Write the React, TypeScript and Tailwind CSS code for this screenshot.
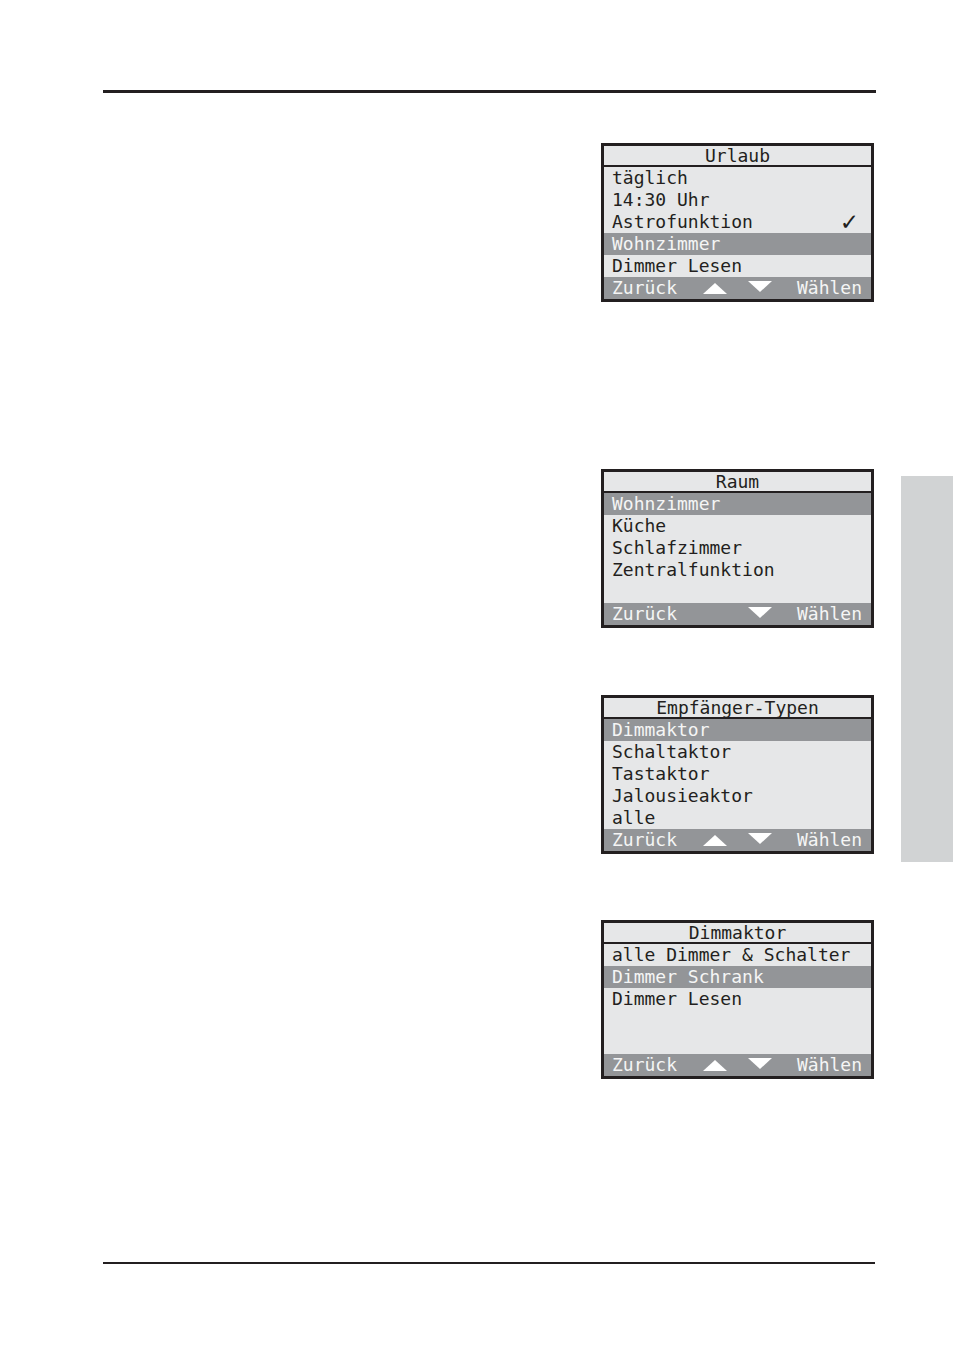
import React from 'react';

type Row = { label: string; active?: boolean; check?: boolean };

const Up: React.FC<{ hidden?: boolean }> = ({ hidden }) => (
  <svg width="24" height="11" viewBox="0 0 24 11" className={`mt-[6px] ${hidden ? 'invisible' : ''}`}>
    <polygon points="0,11 12,0 24,11" fill="#ffffff" />
  </svg>
);

const Down: React.FC = () => (
  <svg width="24" height="11" viewBox="0 0 24 11" className="mt-[4px] ml-[21px]">
    <polygon points="0,0 24,0 12,11" fill="#ffffff" />
  </svg>
);

const Screen: React.FC<{ title: string; rows: Row[]; up?: boolean }> = ({ title, rows, up = true }) => {
  const filled = [...rows];
  while (filled.length < 5) filled.push({ label: '' });

  return (
    <div className="w-[273px] border-[3px] border-[#231f20] bg-[#e6e7e8] font-['DejaVu_Sans_Mono',monospace] text-[18px] text-[#231f20]">
      {/* header */}
      <div className="h-[21px] border-b-2 border-[#231f20] text-center leading-[19px]">{title}</div>

      {filled.map((row, i) => (
        <div
          key={i}
          className={`flex h-[22px] items-center pl-[8px] pr-[12px] leading-[22px] whitespace-pre ${
            row.active ? 'bg-[#939598] text-[#f5f5f5]' : ''
          }`}
        >
          <span>{row.label}</span>
          {row.check && (
            <span className="ml-auto font-['DejaVu_Sans',sans-serif] text-[23px] leading-[22px]">✓</span>
          )}
        </div>
      ))}

      {/* footer */}
      <div className="flex h-[22px] items-start bg-[#939598] pl-[8px] pr-[9px] leading-[22px] text-[#f5f5f5]">
        <span>Zurück</span>
        <div className="ml-[26px] flex">
          <Up hidden={!up} />
          <Down />
        </div>
        <span className="ml-auto">Wählen</span>
      </div>
    </div>
  );
};

const App: React.FC = () => {
  return (
    <div className="h-[1352px] w-[953px] bg-white">
      <div className="h-[90px]" />
      <div className="ml-[103px] h-[3px] w-[773px] bg-[#231f20]" />

      <div className="flex h-[1169px]">
        <div className="flex w-[901px] flex-col pl-[601px] pt-[50px]">
          <Screen
            title="Urlaub"
            rows={[
              { label: 'täglich' },
              { label: '14:30 Uhr' },
              { label: 'Astrofunktion', check: true },
              { label: 'Wohnzimmer', active: true },
              { label: 'Dimmer Lesen' },
            ]}
          />
          <div className="h-[167px]" />
          <Screen
            title="Raum"
            up={false}
            rows={[
              { label: 'Wohnzimmer', active: true },
              { label: 'Küche' },
              { label: 'Schlafzimmer' },
              { label: 'Zentralfunktion' },
            ]}
          />
          <div className="h-[67px]" />
          <Screen
            title="Empfänger-Typen"
            rows={[
              { label: 'Dimmaktor', active: true },
              { label: 'Schaltaktor' },
              { label: 'Tastaktor' },
              { label: 'Jalousieaktor' },
              { label: 'alle' },
            ]}
          />
          <div className="h-[66px]" />
          <Screen
            title="Dimmaktor"
            rows={[
              { label: 'alle Dimmer & Schalter' },
              { label: 'Dimmer Schrank', active: true },
              { label: 'Dimmer Lesen' },
            ]}
          />
        </div>

        {/* side tab */}
        <div className="mt-[383px] h-[386px] w-[52px] bg-[#d1d3d4]" />
      </div>

      <div className="ml-[103px] h-[2px] w-[772px] bg-[#231f20]" />
    </div>
  );
};

export default App;
